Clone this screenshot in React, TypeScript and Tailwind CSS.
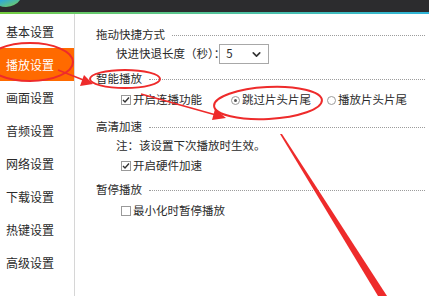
import React from 'react';
import { ChevronDown } from 'lucide-react';

const menuItems = ['基本设置', '播放设置', '画面设置', '音频设置', '网络设置', '下载设置', '热键设置', '高级设置'];

function CheckBox({ checked }: { checked: boolean }) {
  return (
    <span className="w-[10px] h-[10px] border border-[#9a9a9a] bg-white flex items-center justify-center shrink-0">
      {checked && (
        <svg width="8" height="8" viewBox="0 0 8 8">
          <path d="M1 4 L3 6 L7 1.5" fill="none" stroke="#333" strokeWidth={1.4} />
        </svg>
      )}
    </span>
  );
}

function Radio({ checked }: { checked: boolean }) {
  return (
    <span className="w-[9px] h-[9px] rounded-full border border-[#9a9a9a] bg-white flex items-center justify-center shrink-0">
      {checked && <span className="w-[3px] h-[3px] rounded-full bg-[#555]" />}
    </span>
  );
}

function Heading({ title, className }: { title: string; className: string }) {
  return (
    <div className={`flex items-center h-[18px] pl-[21px] pr-[4px] ${className}`}>
      <span className="text-[#2a2a2a]">{title}</span>
      <div className="flex-1 ml-[7px] border-t border-dotted border-[#9c9c9c]" />
    </div>
  );
}

export default function App() {
  return (
    <div className="relative w-[429px] h-[296px] overflow-hidden bg-white font-['Noto_Sans_CJK_SC',sans-serif] text-[11.5px] leading-none">
      {/* title bar */}
      <div className="relative h-[12px] bg-[#2c2c2e]">
        <svg className="absolute left-0 top-0" width="24" height="12" viewBox="0 0 24 12">
          <defs>
            <linearGradient id="lg" x1="0" y1="0" x2="1" y2="1">
              <stop offset="0" stopColor="#2aa8e0" />
              <stop offset="1" stopColor="#7fd34a" />
            </linearGradient>
          </defs>
          <path d="M0 0 H20 Q16 6 6 7 Q2 7 0 6 Z" fill="url(#lg)" />
        </svg>
      </div>
      <div className="h-[2px] bg-linear-to-r from-[#74cc3c] to-[#2eb4d8]" />

      <div className="flex h-[282px]">
        {/* sidebar */}
        <div className="w-[75px] border-r border-[#d6d6d6] pt-[1px] text-[12px]">
          {menuItems.map((item, i) => (
            <div
              key={item}
              className={`h-[33px] flex items-center pl-[6px] ${i === 1 ? 'bg-[#ff6a00] text-white' : 'text-[#2a2a2a]'}`}
            >
              {item}
            </div>
          ))}
        </div>

        {/* content */}
        <div className="flex-1 flex flex-col text-[#2a2a2a]">
          <Heading title="拖动快捷方式" className="mt-[12px]" />
          <div className="flex items-center h-[20px] pl-[41px]">
            <span>快进快退长度（秒）：</span>
            <div className="ml-[-6px] w-[50px] h-[20px] border border-[#a8a8a8] flex items-center justify-between pl-[6px] pr-[5px]">
              <span>5</span>
              <ChevronDown size={13} strokeWidth={3} className="text-[#333]" />
            </div>
          </div>

          <Heading title="智能播放" className="mt-[6px]" />
          <div className="flex items-center h-[18px] mt-[3px] pl-[46px]">
            <CheckBox checked />
            <span className="ml-[2px]">开启连播功能</span>
            <div className="ml-[29px] flex items-center">
              <Radio checked />
              <span className="ml-[2px]">跳过片头片尾</span>
            </div>
            <div className="ml-[16px] flex items-center">
              <Radio checked={false} />
              <span className="ml-[2px]">播放片头片尾</span>
            </div>
          </div>

          <Heading title="高清加速" className="mt-[9px]" />
          <div className="flex items-center h-[18px] mt-[1px] pl-[41px]">注：该设置下次播放时生效。</div>
          <div className="flex items-center h-[18px] mt-[2px] pl-[46px]">
            <CheckBox checked />
            <span className="ml-[2px]">开启硬件加速</span>
          </div>

          <Heading title="暂停播放" className="mt-[6px]" />
          <div className="flex items-center h-[18px] mt-[3px] pl-[46px]">
            <CheckBox checked={false} />
            <span className="ml-[2px]">最小化时暂停播放</span>
          </div>
        </div>
      </div>

      {/* red annotations */}
      <svg className="absolute inset-0 pointer-events-none" width="429" height="296" viewBox="0 0 429 296">
        <g fill="none" stroke="#ee2b2b" strokeWidth={2}>
          <ellipse cx="30" cy="62" rx="43" ry="19" />
          <ellipse cx="125" cy="79" rx="35" ry="9" />
          <ellipse cx="268" cy="103" rx="54" ry="16" transform="rotate(-3 268 103)" />
          <line x1="58" y1="70" x2="86" y2="81" strokeWidth={1.6} />
          <line x1="141" y1="94" x2="216" y2="115" strokeWidth={1.6} />
        </g>
        <g fill="#ee2b2b">
          <polygon points="93,84 80,86 84,75" />
          <polygon points="226,118 212,120 215,109" />
          <polygon points="280,134 282,134 387,296 378,296" />
        </g>
      </svg>
    </div>
  );
}
